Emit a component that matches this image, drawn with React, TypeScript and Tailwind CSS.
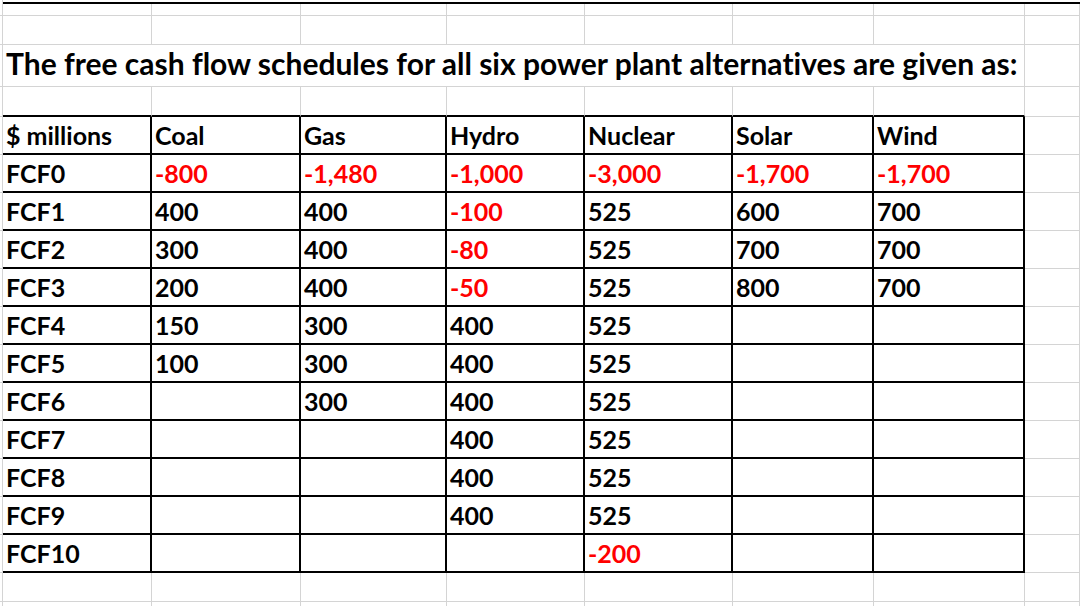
import React from "react";

const COLS = ["w-[149px]", "w-[149px]", "w-[146px]", "w-[138px]", "w-[148px]", "w-[141px]", "w-[151px]"];

type Val = string | [string, "red"];

const header = ["$ millions", "Coal", "Gas", "Hydro", "Nuclear", "Solar", "Wind"];

const neg = (v: string): Val => [v, "red"];

const rows: Val[][] = [
  ["FCF0", neg("-800"), neg("-1,480"), neg("-1,000"), neg("-3,000"), neg("-1,700"), neg("-1,700")],
  ["FCF1", "400", "400", neg("-100"), "525", "600", "700"],
  ["FCF2", "300", "400", neg("-80"), "525", "700", "700"],
  ["FCF3", "200", "400", neg("-50"), "525", "800", "700"],
  ["FCF4", "150", "300", "400", "525", "", ""],
  ["FCF5", "100", "300", "400", "525", "", ""],
  ["FCF6", "", "300", "400", "525", "", ""],
  ["FCF7", "", "", "400", "525", "", ""],
  ["FCF8", "", "", "400", "525", "", ""],
  ["FCF9", "", "", "400", "525", "", ""],
  ["FCF10", "", "", "", neg("-200"), "", ""],
];

const gray = "border-r border-b border-[#d4d4d4]";

function BlankRow({ h, bottom = "gray" }: { h: string; bottom?: "gray" | "black" }) {
  const cell = bottom === "black" ? "border-r border-r-[#d4d4d4] border-b-2 border-b-black" : gray;
  return (
    <div className={`flex ${h}`}>
      <div className={`w-[3px] shrink-0 ${gray}`} />
      {COLS.map((w, i) => (
        <div key={i} className={`${w} shrink-0 ${cell}`} />
      ))}
      <div className={`flex-1 ${gray}`} />
    </div>
  );
}

function Cell({ w, v }: { w: string; v: Val }) {
  const text = typeof v === "string" ? v : v[0];
  const red = typeof v !== "string";
  return (
    <div className={`${w} shrink-0 border-r-2 border-b-2 border-black flex items-end pl-[3px] pb-[5px] text-[25px] leading-none ${red ? "text-[#ff0000]" : "text-black"}`}>
      {text}
    </div>
  );
}

function TableRow({ cells }: { cells: Val[] }) {
  return (
    <div className="flex h-[38px]">
      <div className={`w-[3px] shrink-0 ${gray}`} />
      {COLS.map((w, i) => (
        <Cell key={i} w={w} v={cells[i]} />
      ))}
      <div className={`flex-1 ${gray}`} />
    </div>
  );
}

export default function App() {
  return (
    <div className="w-[1080px] h-[606px] overflow-hidden bg-white font-[Lato,sans-serif] font-bold text-black [font-variant-ligatures:none]">
      <div className="flex h-[4px]">
        <div className="w-[3px] shrink-0 border-r border-[#d4d4d4]" />
        <div className="flex-1 border-b-2 border-black" />
      </div>
      <BlankRow h="h-[12px]" />
      <BlankRow h="h-[29px]" />
      <div className="flex h-[42px]">
        <div className={`w-[3px] shrink-0 ${gray}`} />
        <div className={`w-[1022px] shrink-0 ${gray} flex items-end pl-[3px] pb-[8px] text-[30px] leading-none whitespace-nowrap`}>
          The free cash flow schedules for all six power plant alternatives are given as:
        </div>
        <div className={`flex-1 ${gray}`} />
      </div>
      <BlankRow h="h-[30px]" bottom="black" />
      <TableRow cells={header} />
      {rows.map((r, i) => (
        <TableRow key={i} cells={r} />
      ))}
      <BlankRow h="h-[29px]" />
      <BlankRow h="h-[29px]" />
    </div>
  );
}
